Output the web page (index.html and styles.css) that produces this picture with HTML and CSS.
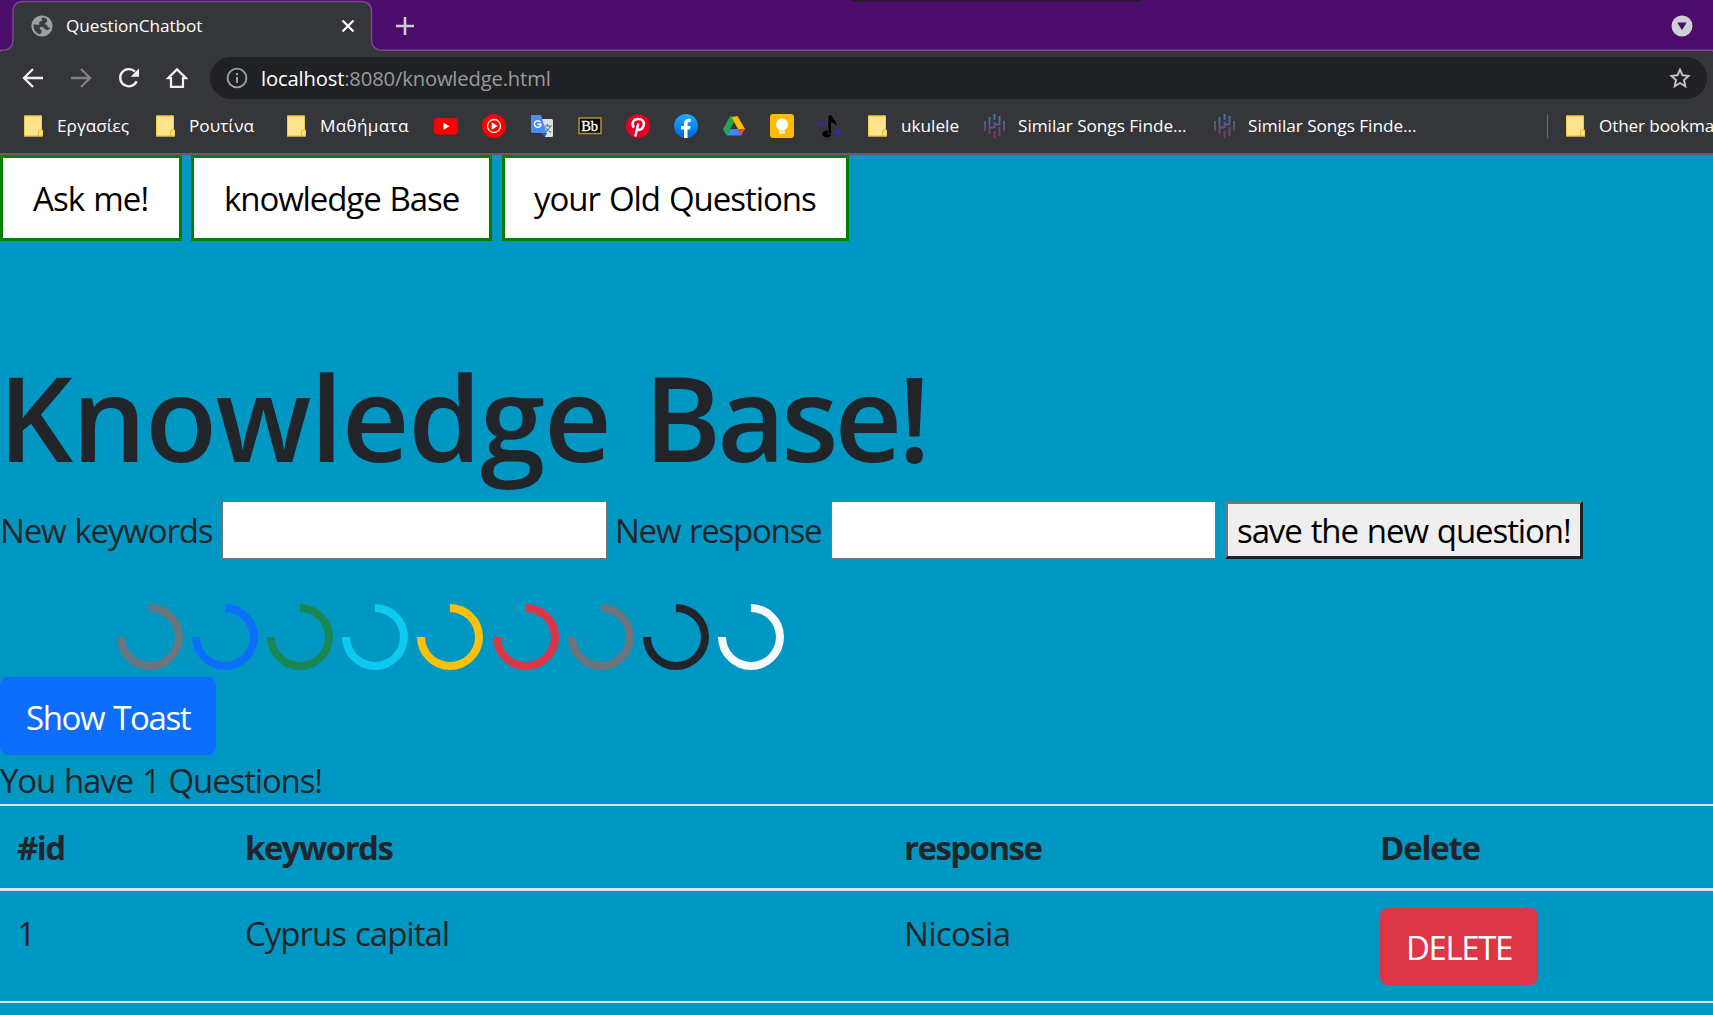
FILE: index.html
```html
<!DOCTYPE html>
<html lang="en">
<head>
<meta charset="utf-8">
<title>QuestionChatbot</title>
<link rel="stylesheet" href="styles.css">
</head>
<body>
<svg class="defs" aria-hidden="true">
  <defs>
    <symbol id="folder" viewBox="0 0 19 22">
      <path d="M.5 1h17v14h1v6H.5z" fill="#ffe48d" stroke="#efc94c"/>
      <path d="M.5.8h17" stroke="#d9b23c" fill="none"/>
      <path d="M14.5 21v-4.500q0-1.500 1.500-1.500h2.500" stroke="#e3b93c" fill="#ffdf70"/>
      <path d="M0 21.300h19" stroke="#c9a540" fill="none"/>
    </symbol>
    <linearGradient id="barTint" gradientUnits="userSpaceOnUse" x1="0" y1="0" x2="0" y2="24">
      <stop offset="0" stop-color="#3f86b8"/><stop offset=".5" stop-color="#5a5484"/><stop offset="1" stop-color="#a02a60"/>
    </linearGradient>
    <symbol id="bars" viewBox="0 0 21 24">
      <path d="M1 7v10M5.500 3v17M10.500 0v6M10.500 8v6M10.500 17v7M15.500 2v9M15.500 13v9M20 7v10M5.500 13.500h5M10.500 10.500h5" stroke="url(#barTint)" stroke-width="1.800" fill="none"/>
    </symbol>
    <linearGradient id="fbBlue" x1="0" y1="0" x2="0" y2="1">
      <stop offset="0" stop-color="#19aefc"/><stop offset="1" stop-color="#0163e0"/>
    </linearGradient>
  </defs>
</svg>

<header class="browser">
  <div class="tabstrip">
    <svg class="tab-shape" width="1713" height="52" viewBox="0 0 1713 52">
      <path d="M0 50.300H2Q13 50.300 13 39V12Q13 1.500 23.500 1.500H361Q371.500 1.500 371.500 12V39Q371.500 50.300 383 50.300H1713V53H0z" fill="#35363a" stroke="#794a91" stroke-width="1.400"/>
      <path d="M851 0h290v1.500H851z" fill="#26182c"/>
    </svg>
    <svg class="globe" width="22" height="22" viewBox="0 0 22 22">
      <circle cx="11" cy="11" r="10.600" fill="#9aa0a6"/>
      <path d="M12 2.500c-2 .2-1.500 2.300-.6 3-1 .9-3 .3-3.200 2.200-.1 1.200.4 1.800-.7 2.400L2.600 9.200C2 13 4 17.500 8.500 19.200c1-.8 2.300-1.200 2.300-2.700 0-1.700-1.800-1.700-2.300-3.300 1-1.800 3.500-1 4.500-.3.700 1.600 2.200 1.700 3.800 2 1.200-.2 2-1 2.500-2.300-1.700.3-3-.4-3-1.800-.1-1.300-1.500-1.300-2.600-1.600 0-1.800 2.300-1.300 2.500-3.200.1-1.200-.7-2.200-1.500-3z" fill="#3a3c40"/>
    </svg>
    <span class="tab-title">QuestionChatbot</span>
    <svg class="tab-close" width="14" height="14" viewBox="0 0 14 14"><path d="M1.500 1.500l11 11M12.500 1.500l-11 11" stroke="#fff" stroke-width="2.200"/></svg>
    <svg class="tab-new" width="20" height="20" viewBox="0 0 20 20"><path d="M1 10h18M10 1v18" stroke="#cfc9d4" stroke-width="2.600"/></svg>
    <svg class="tab-menu" width="22" height="22" viewBox="0 0 22 22"><circle cx="11" cy="11" r="10.500" fill="#cfcfd6"/><path d="M6.300 7.500h9.400L11 15.200z" fill="#4b0d6c"/></svg>
  </div>

  <div class="toolbar">
    <svg width="22" height="22" viewBox="0 0 22 22"><path d="M21 11H2.500M11 2L2 11l9 9" fill="none" stroke="#f1f1f2" stroke-width="2.300"/></svg>
    <svg width="22" height="22" viewBox="0 0 22 22"><path d="M1 11h18.500M11 2l9 9-9 9" fill="none" stroke="#808184" stroke-width="2.300"/></svg>
    <svg width="22" height="22" viewBox="0 0 22 22"><path d="M18.700 14.200A8.600 8.600 0 1 1 17 4.700" fill="none" stroke="#f1f1f2" stroke-width="2.400"/><path d="M21 1.500v8.300h-8.300z" fill="#f1f1f2"/></svg>
    <svg width="22" height="22" viewBox="0 0 22 22"><path d="M2 11.200L11 2.400l9 8.800h-3v8.600H5v-8.600z" fill="none" stroke="#f1f1f2" stroke-width="2.200"/></svg>
    <div class="omnibox">
      <svg width="22" height="22" viewBox="0 0 22 22"><circle cx="11" cy="11" r="9.400" fill="none" stroke="#9aa0a6" stroke-width="1.900"/><path d="M11 10v6M11 6v2.200" stroke="#9aa0a6" stroke-width="2"/></svg>
      <span class="url"><b>localhost</b>:8080/knowledge.html</span>
      <svg class="star" width="22" height="22" viewBox="0 0 22 22"><path d="M11 2.600l2.500 5.700 6.100.6-4.600 4.200 1.300 6.100L11 16l-5.300 3.200L7 13.100 2.400 8.900l6.100-.6z" fill="none" stroke="#c6c7ca" stroke-width="1.900"/></svg>
    </div>
  </div>

  <nav class="bookmarks">
    <a class="bm w132"><svg width="19" height="22"><use href="#folder"/></svg><span>Εργασίες</span></a>
    <a class="bm w131"><svg width="19" height="22"><use href="#folder"/></svg><span>Ρουτίνα</span></a>
    <a class="bm w147"><svg width="19" height="22"><use href="#folder"/></svg><span class="loose">Μαθήματα</span></a>
    <a class="bm w48"><svg width="24" height="24" viewBox="0 0 24 24"><rect y="4" width="24" height="16.500" rx="4" fill="#f00"/><path d="M9.500 8.700v7l6-3.500z" fill="#fff"/></svg></a>
    <a class="bm w48"><svg width="24" height="24" viewBox="0 0 24 24"><circle cx="12" cy="12" r="12" fill="#f00"/><circle cx="12" cy="12" r="6.500" fill="none" stroke="#fff" stroke-width="1.300"/><path d="M9.600 8.300v7.400l6-3.700z" fill="#fff"/></svg></a>
    <a class="bm w48"><svg width="24" height="24" viewBox="0 0 24 24"><path d="M11 5h10.500q1.500 0 1.500 1.500v15q0 1.500-1.500 1.500H15z" fill="#dfe1e4"/><path d="M14 12h8M17.500 10v2M20.500 12q-1.500 4-5 6M15.500 13.500q2 3 5.500 5" stroke="#5d7f86" stroke-width="1.200" fill="none"/><path d="M11 19l4 4 2-4z" fill="#3a4fbd"/><path d="M2 1h9l5.500 18H2.500Q1 19 1 17.500V2Q1 1 2 1z" fill="#4c8bf5"/><path d="M10.300 8A3.300 3.300 0 1 0 11 10.300H7.700" stroke="#fff" stroke-width="1.500" fill="none"/></svg></a>
    <a class="bm w48"><svg width="24" height="24" viewBox="0 0 24 24"><rect x="1" y="4" width="22" height="15.500" fill="#060606" stroke="#b8912f" stroke-width="1.500"/><text x="3.200" y="16.500" class="bb">Bb</text></svg></a>
    <a class="bm w48"><svg width="24" height="24" viewBox="0 0 24 24"><circle cx="12" cy="12" r="12" fill="#e60023"/><path d="M9.300 22.500L12.300 9.500M7.800 13.600C4.800 9.200 7.500 4.900 12.200 4.900c4.300 0 6.300 3 5.500 6.500-.8 3.700-4.700 6-6.700 3.200" fill="none" stroke="#fff" stroke-width="2.500"/></svg></a>
    <a class="bm w48"><svg width="24" height="24" viewBox="0 0 24 24"><circle cx="12" cy="12" r="12" fill="url(#fbBlue)"/><path d="M10 24v-8.500H7V12h3V9.500C10 6.300 11.900 4.700 14.600 4.700c1 0 1.900.2 2.100.2v3h-1.500c-1.400 0-1.700.8-1.700 1.700V12h3.200l-.6 3.500h-2.600V24z" fill="#fff"/></svg></a>
    <a class="bm w48"><svg width="24" height="24" viewBox="0 0 24 24"><path d="M8.500 2h7l-3.500 6z" fill="#188038"/><path d="M8.500 2L1 15l3.700 6.500L12 8.300z" fill="#22a853"/><path d="M15.500 2L23 15h-7.200L9.500 3.500z" fill="#fbbc04"/><path d="M8.500 2l3.500 6.300-2.500 4.200L5 8z" fill="#22a853"/><path d="M15.800 15H23l-3.700 6.500z" fill="#ea4335"/><path d="M8.300 15h7.500l3.500 6.500H4.700z" fill="#4285f4"/><path d="M12 8.500l3.700 6.500H8.300z" fill="#35363a"/></svg></a>
    <a class="bm w48"><svg width="24" height="24" viewBox="0 0 24 24"><rect width="24" height="24" rx="3" fill="#fb0"/><circle cx="12" cy="10.500" r="6" fill="#fff"/><path d="M9 13h6v3.500H9zM9 17.500h6v2H9z" fill="#fff"/></svg></a>
    <a class="bm w50"><svg width="24" height="24" viewBox="0 0 24 24"><ellipse cx="8.800" cy="20" rx="4.600" ry="3.600" fill="#000"/><path d="M10 20V1h4.400q.2 3 3 5.500 2.400 3.500.5 7.500-.2-4.500-4.500-5.500V20z" fill="#000" stroke="#56575a" stroke-width=".5"/><path d="M0 9.500h8M16 18.500h8M20 14.500v8" stroke="#3a22c0" stroke-width="1.800"/></svg></a>
    <a class="bm w116"><svg width="19" height="22"><use href="#folder"/></svg><span>ukulele</span></a>
    <a class="bm song w230"><svg width="21" height="24"><use href="#bars"/></svg><span>Similar Songs Finde...</span></a>
    <a class="bm song w333"><svg width="21" height="24"><use href="#bars"/></svg><span>Similar Songs Finde...</span></a>
    <i class="rule"></i>
    <a class="bm other"><svg width="19" height="22"><use href="#folder"/></svg><span>Other bookma</span></a>
  </nav>
</header>

<main class="page">
  <nav class="menu">
    <a class="ask">Ask me!</a><a class="know">knowledge Base</a><a class="old">your Old Questions</a>
  </nav>
  <h1>Knowledge <span>Base!</span></h1>
  <form class="entry">
    <label class="l-key" for="kw">New keywords</label><input id="kw" type="text">
    <label class="l-res" for="rs">New response</label><input id="rs" type="text">
    <button type="button" class="save">save the new question!</button>
  </form>
  <div class="spinners">
    <i class="c-secondary"></i><i class="c-primary"></i><i class="c-success"></i><i class="c-info"></i><i class="c-warning"></i><i class="c-danger"></i><i class="c-secondary"></i><i class="c-dark"></i><i class="c-light"></i>
  </div>
  <button type="button" class="btn toast">Show Toast</button>
  <p class="count">You have 1 Questions!</p>
  <div class="table">
    <div class="row head"><span>#id</span><span>keywords</span><span>response</span><span class="h-del">Delete</span></div>
    <div class="row"><span>1</span><span>Cyprus capital</span><span class="city">Nicosia</span><span><button type="button" class="btn delete">DELETE</button></span></div>
  </div>
</main>
</body>
</html>
```
FILE: styles.css
```css
* { box-sizing: border-box; }
body {
  margin: 0;
  width: 1713px;
  height: 1015px;
  overflow: hidden;
  background: #0098c3;
  color: #212529;
  font-family: "Open Sans", "Noto Sans", sans-serif;
  white-space: nowrap;
}
.defs { position: absolute; width: 0; height: 0; }
svg { display: block; flex: none; }

/* browser chrome */
.browser {
  height: 155px;
  overflow: hidden;
  background: #35363a;
  border-bottom: 2px solid #5f6064;
  color: #fff;
  font-size: 17.2px;
}
.tabstrip {
  position: relative;
  display: flex;
  align-items: center;
  height: 51px;
  padding-left: 31px;
  background: #4b0d6c;
}
.tab-shape { position: absolute; left: 0; top: 0; }
.tabstrip > :not(.tab-shape) { position: relative; }
.tab-title { width: 288px; padding: 0 0 1px 13px; letter-spacing: -0.05px; }
.tab-new { margin-left: 40px; }
.tab-menu { margin-left: 1256px; }
.toolbar {
  display: flex;
  align-items: center;
  height: 54px;
  padding: 0 6px 0 22px;
}
.toolbar > svg { margin-right: 26px; }
.omnibox {
  display: flex;
  flex: 1;
  align-items: center;
  height: 42px;
  margin: 0 0 0 -4px;
  padding: 0 16px;
  border-radius: 21px;
  background: #202124;
}
.url {
  flex: 1;
  padding-left: 13px;
  color: #9a9b9d;
  font-size: 20.2px;
  letter-spacing: -0.15px;
}
.url b { color: #fff; font-weight: 400; }
.bookmarks {
  display: flex;
  align-items: center;
  height: 42px;
  padding-left: 24px;
}
.bm { display: flex; flex: none; align-items: center; }
.bm span { margin: 0 0 1px 14px; }
.bm.song span { margin-left: 13px; letter-spacing: -0.03px; }
.bm .loose { letter-spacing: 0.3px; }
.bb { font: 14.5px "Liberation Serif", serif; fill: #fff; stroke: #fff; stroke-width: .3px; }
.w48 { width: 48px; }
.w50 { width: 50px; }
.w116 { width: 116px; }
.w131 { width: 131px; }
.w132 { width: 132px; }
.w147 { width: 147px; }
.w230 { width: 230px; }
.w333 { width: 333px; }
.rule { flex: none; width: 1px; height: 24px; margin-right: 18px; background: #6b6c70; }
.other { letter-spacing: -0.15px; }

/* page */
.page { font-size: 33px; letter-spacing: -1.1px; word-spacing: 1.5px; }
.menu { display: flex; height: 86px; }
.menu a {
  padding: 0 0 0 30px;
  border: 3px solid #008000;
  background: #fff;
  color: #000;
  line-height: 82px;
}
.ask { width: 182px; letter-spacing: -0.95px; }
.know { width: 301px; margin: 0 10px 0 9px; }
.menu .old { width: 347px; padding-left: 29px; letter-spacing: -1.05px; }
h1 {
  margin: 104px 0 14px -2px;
  font-size: 117.6px;
  font-weight: 600;
  letter-spacing: -1.3px;
  line-height: 142px;
  word-spacing: 4px;
}
h1 span { letter-spacing: -4px; }
.entry { display: flex; height: 58px; line-height: 60px; }
.entry label { width: 222px; letter-spacing: -1.15px; }
.entry .l-res { width: 224px; padding-left: 8px; letter-spacing: -1.25px; }
.entry input {
  width: 385px;
  height: 58px;
  border: 1px solid #767676;
  background: #fff;
}
.save {
  width: 358px;
  height: 58px;
  margin-left: 9px;
  padding: 1px 0 0 9px;
  border: 3px solid;
  border-color: #767676 #212121 #212121 #767676;
  background: #efefef;
  color: #000;
  font: inherit;
  line-height: 49px;
  letter-spacing: -1.1px;
  word-spacing: inherit;
  text-align: left;
}
.spinners { display: flex; gap: 9.15px; margin: 45px 0 7px; padding-left: 116.8px; }
.spinners i {
  width: 66px;
  height: 66px;
  border: 8.300px solid currentColor;
  border-right-color: transparent;
  border-radius: 50%;
  transform: rotate(-135deg);
}
.c-secondary { color: #6c757d; }
.c-primary { color: #0d6efd; }
.c-success { color: #198754; }
.c-info { color: #0dcaf0; }
.c-warning { color: #ffc107; }
.c-danger { color: #dc3545; }
.c-dark { color: #212529; }
.c-light { color: #f8f9fa; }
.btn {
  display: block;
  padding: 2px 0 0 26px;
  border: 0;
  border-radius: 8px;
  color: #fff;
  font: inherit;
  text-align: left;
}
.toast { width: 216px; height: 78px; background: #0d6efd; letter-spacing: -1.4px; word-spacing: 2px; }
.count { height: 49px; margin: 0; line-height: 52px; letter-spacing: -1.15px; }
.table { border-top: 2px solid #dee2e6; }
.row {
  display: grid;
  grid-template-columns: 228px 659px 476px 1fr;
  height: 112px;
  padding: 17px 0 0 17px;
  border-bottom: 2px solid #dee2e6;
  line-height: 52px;
  letter-spacing: -1px;
}
.head {
  height: 85px;
  padding-top: 16px;
  border-bottom-width: 3px;
  font-weight: 700;
  letter-spacing: -1.55px;
}
.h-del { letter-spacing: -1.25px; }
.city { letter-spacing: -0.7px; }
.delete { width: 158px; height: 77px; background: #dc3545; letter-spacing: -1.4px; }
```
